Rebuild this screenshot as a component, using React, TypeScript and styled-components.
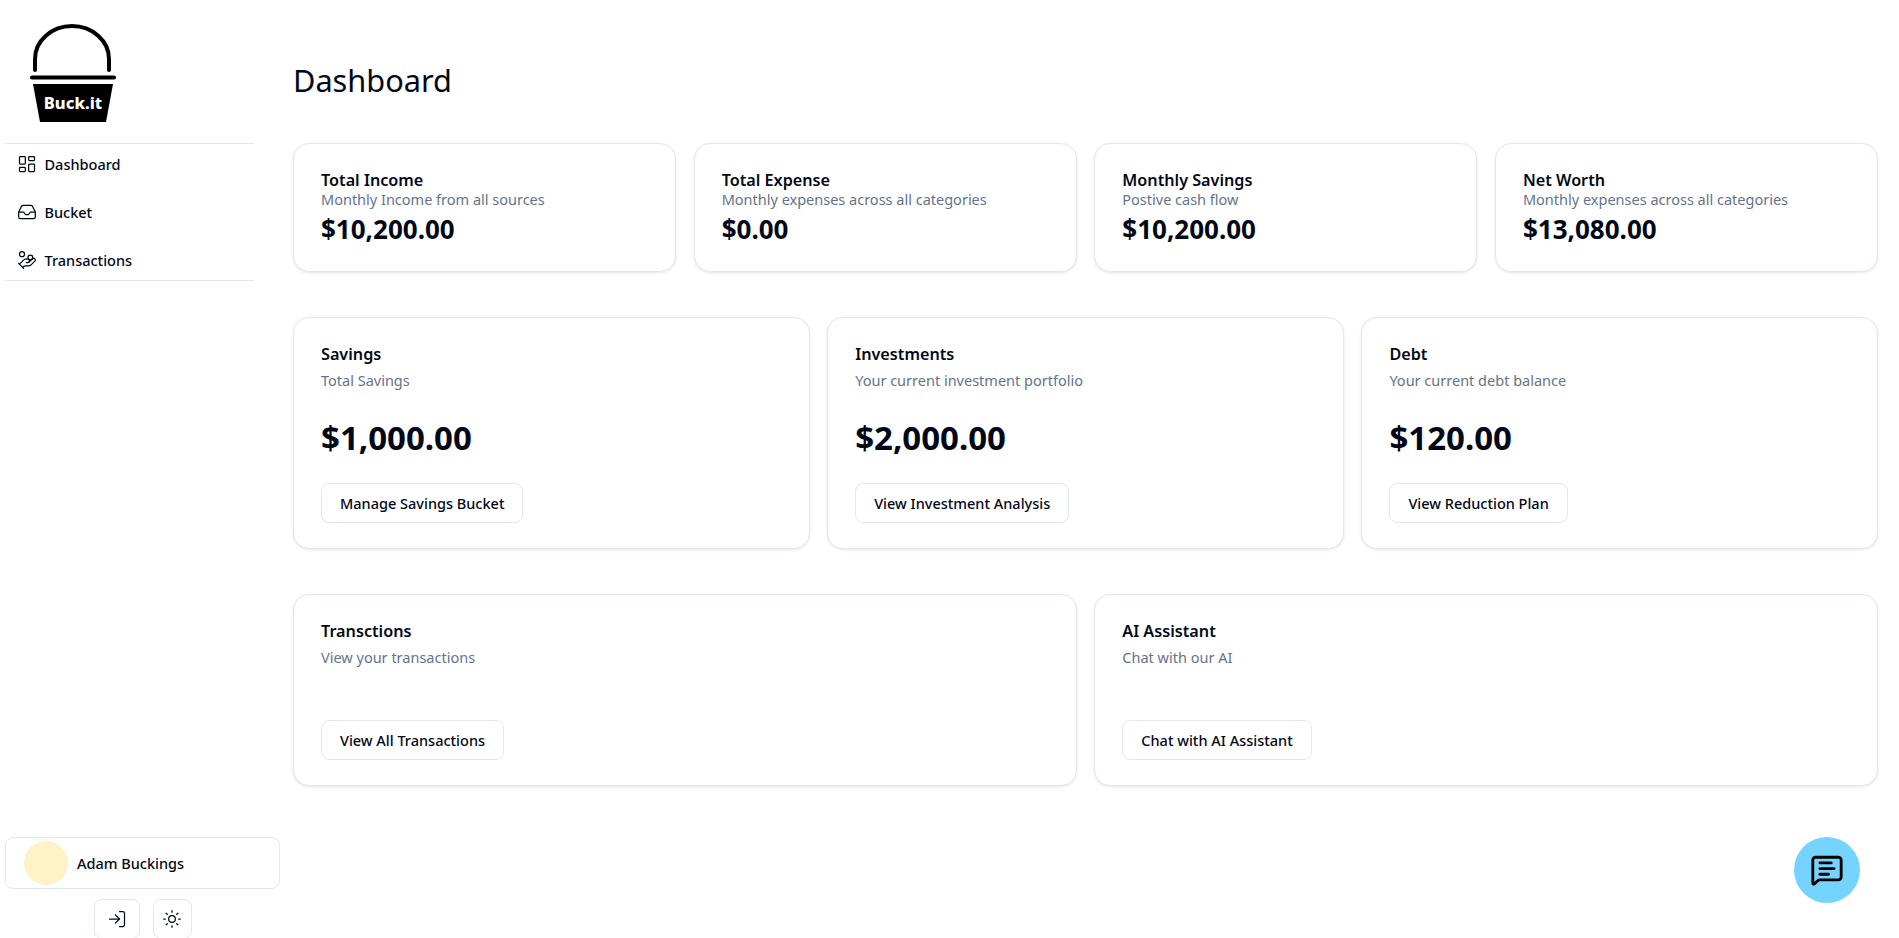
import styled, { createGlobalStyle } from "styled-components";
import { LayoutDashboard, Inbox, HandCoins, LogIn, Sun, MessageSquareText } from "lucide-react";

const GlobalStyle = createGlobalStyle`
    * { box-sizing: border-box; }
    html, body { margin: 0; height: 100%; background: #fff; }
    body {
        font-family: "Noto Sans", "Open Sans", Arial, sans-serif;
        color: #020817;
        overflow: hidden;
    }
`;

const summaryCards = [
    { title: "Total Income", desc: "Monthly Income from all sources", value: "$10,200.00" },
    { title: "Total Expense", desc: "Monthly expenses across all categories", value: "$0.00" },
    { title: "Monthly Savings", desc: "Postive cash flow", value: "$10,200.00" },
    { title: "Net Worth", desc: "Monthly expenses across all categories", value: "$13,080.00" },
];

const balanceCards = [
    { title: "Savings", desc: "Total Savings", value: "$1,000.00", action: "Manage Savings Bucket" },
    { title: "Investments", desc: "Your current investment portfolio", value: "$2,000.00", action: "View Investment Analysis" },
    { title: "Debt", desc: "Your current debt balance", value: "$120.00", action: "View Reduction Plan" },
];

const linkCards = [
    { title: "Transctions", desc: "View your transactions", action: "View All Transactions" },
    { title: "AI Assistant", desc: "Chat with our AI", action: "Chat with AI Assistant" },
];

function Logo() {
    return (
        <svg width="88" height="98" viewBox="0 0 88 98">
            <path d="M5 46 V35 A37 33 0 0 1 79 35 V46" fill="none" stroke="#000" strokeWidth="4" strokeLinecap="round" />
            <line x1="2" y1="53.5" x2="84" y2="53.5" stroke="#000" strokeWidth="4" strokeLinecap="round" />
            <path d="M3 60 H83 L76 98 H10 Z" fill="#000" />
            <text x="43" y="85" textAnchor="middle" fill="#fff" fontSize="16.5" fontWeight="800" fontFamily="'Noto Sans', sans-serif">Buck.it</text>
        </svg>
    );
}

export default function App() {
    return (
        <Page>
            <GlobalStyle />
            <Sidebar>
                <LogoWrap>
                    <Logo />
                </LogoWrap>
                <Nav>
                    <NavItem><LayoutDashboard size={20} strokeWidth={1.5} />Dashboard</NavItem>
                    <NavItem><Inbox size={20} strokeWidth={1.5} />Bucket</NavItem>
                    <NavItem><HandCoins size={20} strokeWidth={1.5} />Transactions</NavItem>
                </Nav>
                <Footer>
                    <UserBox>
                        <Avatar />
                        Adam Buckings
                    </UserBox>
                    <FooterButtons>
                        <IconButton $wide><LogIn size={20} strokeWidth={1.5} /></IconButton>
                        <IconButton><Sun size={20} strokeWidth={1.5} /></IconButton>
                    </FooterButtons>
                </Footer>
            </Sidebar>
            <Main>
                <Title>Dashboard</Title>
                <Row $columns={4}>
                    {summaryCards.map((card) => (
                        <Card key={card.title}>
                            <CardTitle>{card.title}</CardTitle>
                            <CardDesc>{card.desc}</CardDesc>
                            <SmallValue>{card.value}</SmallValue>
                        </Card>
                    ))}
                </Row>
                <Row $columns={3}>
                    {balanceCards.map((card) => (
                        <Card key={card.title}>
                            <CardTitle>{card.title}</CardTitle>
                            <CardDesc $spaced>{card.desc}</CardDesc>
                            <BigValue>{card.value}</BigValue>
                            <ActionButton>{card.action}</ActionButton>
                        </Card>
                    ))}
                </Row>
                <Row $columns={2}>
                    {linkCards.map((card) => (
                        <Card key={card.title}>
                            <CardTitle>{card.title}</CardTitle>
                            <CardDesc $spaced>{card.desc}</CardDesc>
                            <LinkAction>{card.action}</LinkAction>
                        </Card>
                    ))}
                </Row>
            </Main>
            <ChatBubble><MessageSquareText size={34} /></ChatBubble>
        </Page>
    );
}

const Page = styled.div`
    display: flex;
    height: 938px;
    width: 1899px;
    overflow: hidden;
`;

const Sidebar = styled.aside`
    width: 293px;
    flex-shrink: 0;
    padding-left: 5px;
    display: flex;
    flex-direction: column;
`;

const LogoWrap = styled.div`
    height: 143px;
    padding: 24px 0 0 25px;
`;

const Nav = styled.nav`
    width: 249px;
    display: flex;
    flex-direction: column;
    gap: 8px;
    border-top: 1px solid #e2e8f0;
    border-bottom: 1px solid #e2e8f0;
`;

const NavItem = styled.a`
    height: 40px;
    display: flex;
    align-items: center;
    gap: 8px;
    padding: 0 0 1px 11.5px;
    font-size: 14.5px;
    font-weight: 500;
`;

const Footer = styled.div`
    margin-top: auto;
    margin-bottom: -1px;
    width: 275px;
    display: flex;
    flex-direction: column;
    gap: 10px;
`;

const UserBox = styled.div`
    height: 52px;
    display: flex;
    align-items: center;
    gap: 9px;
    padding-left: 18px;
    border: 1px solid #e2e8f0;
    border-radius: 8px;
    font-size: 14.5px;
    font-weight: 500;
`;

const Avatar = styled.div`
    width: 44px;
    height: 44px;
    border-radius: 50%;
    background: #fef3c7;
`;

const FooterButtons = styled.div`
    display: flex;
    justify-content: center;
    gap: 13px;
`;

const IconButton = styled.button<{ $wide?: boolean }>`
    width: ${({ $wide }) => ($wide ? "46px" : "39px")};
    height: 40px;
    display: flex;
    align-items: center;
    justify-content: center;
    padding: 0;
    background: #fff;
    color: #020817;
    border: 1px solid #e2e8f0;
    border-radius: 8px;
`;

const Main = styled.main`
    flex: 1;
    padding: 0 21px 0 0;
`;

const Title = styled.h1`
    margin: 0;
    height: 143px;
    padding-top: 58px;
    font-size: 30.7px;
    line-height: 45px;
    font-weight: 400;
`;

const Row = styled.section<{ $columns: number }>`
    display: grid;
    grid-template-columns: repeat(${({ $columns }) => $columns}, 1fr);
    gap: 17.6px;
    margin-bottom: 45px;
`;

const Card = styled.div`
    padding: 24px 27px;
    background: #fff;
    border: 1px solid #e2e8f0;
    border-radius: 16px;
    box-shadow: 0 1px 3px rgba(0, 0, 0, 0.1);
`;

const CardTitle = styled.h3`
    margin: 0;
    font-size: 16.2px;
    line-height: 24px;
    font-weight: 600;
`;

const CardDesc = styled.p<{ $spaced?: boolean }>`
    margin: ${({ $spaced }) => ($spaced ? "4px 0 0" : "-3px 0 0")};
    font-size: 14.5px;
    line-height: 20px;
    color: #64748b;
`;

const SmallValue = styled.div`
    margin-top: 3px;
    padding-bottom: 0.5px;
    font-size: 26px;
    line-height: 34px;
    font-weight: 700;
`;

const BigValue = styled.div`
    margin: 27px 0 25px;
    font-size: 33px;
    line-height: 41px;
    font-weight: 700;
`;

const ActionButton = styled.button`
    display: block;
    height: 40px;
    margin-bottom: 1px;
    padding: 0 18px;
    background: #fff;
    color: #020817;
    border: 1px solid #e2e8f0;
    border-radius: 8px;
    font-family: inherit;
    font-size: 14.5px;
    font-weight: 500;
`;

const LinkAction = styled(ActionButton)`
    margin-top: 53px;
`;

const ChatBubble = styled.button`
    position: fixed;
    left: 1794px;
    top: 837px;
    width: 66px;
    height: 66px;
    display: flex;
    align-items: center;
    justify-content: center;
    padding: 0;
    border: none;
    border-radius: 50%;
    background: #75d4ff;
    color: #000;
`;
